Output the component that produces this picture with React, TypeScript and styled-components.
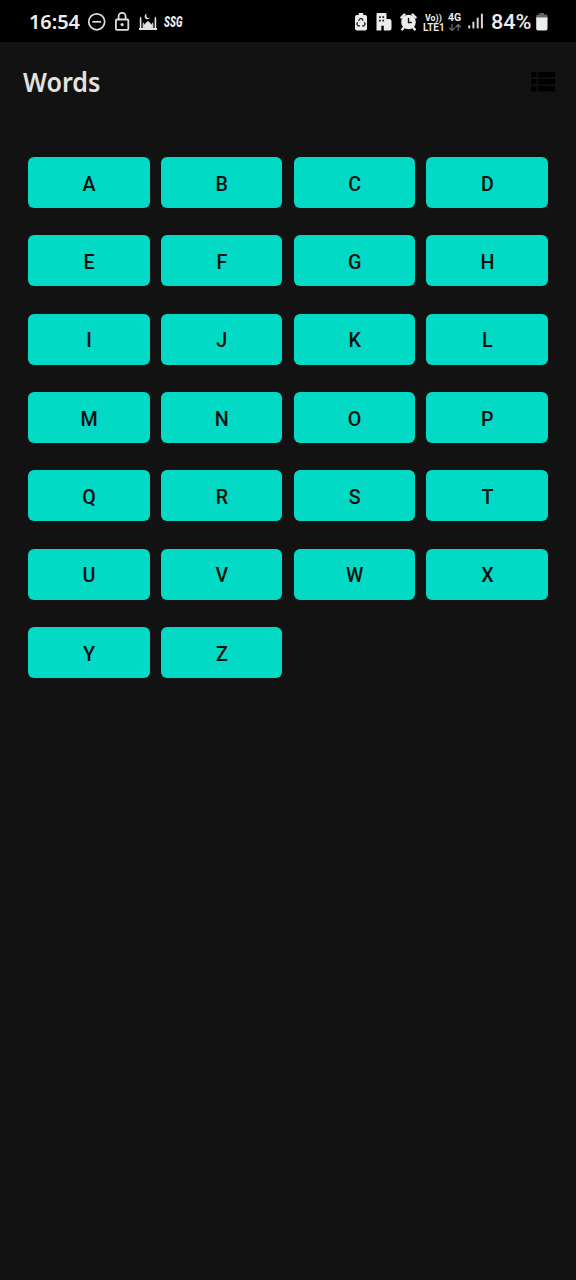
import React from "react";
import styled, { createGlobalStyle } from "styled-components";

const GlobalStyle = createGlobalStyle`
  * { box-sizing: border-box; }
  html, body { margin: 0; padding: 0; background: #121212; }
  body { font-family: "Noto Sans", Roboto, sans-serif; }
`;

const Screen = styled.div`
  width: 576px;
  height: 1280px;
  overflow: hidden;
  background: #121212;
`;

const StatusBar = styled.header`
  display: flex;
  justify-content: space-between;
  height: 42px;
  padding: 0 28px 0 29px;
  background: #000;
  color: #ededed;
`;

const StatusGroup = styled.div`
  display: flex;
  align-items: center;
  height: 43px;
  svg { display: block; flex: none; }
`;

const Label = styled.span<{ $w: number; $size: number; $weight?: number; $stretch?: number; $ml?: number }>`
  flex: none;
  width: ${(p) => p.$w}px;
  margin-left: ${(p) => p.$ml ?? 0}px;
  font-size: ${(p) => p.$size}px;
  font-weight: ${(p) => p.$weight ?? 600};
  line-height: 1;
  white-space: nowrap;
  transform: scaleX(${(p) => p.$stretch ?? 1});
  transform-origin: left center;
`;

const Carrier = styled(Label)`
  font-family: Roboto, sans-serif;
  font-style: italic;
`;

const Percent = styled(Label)`
  padding-top: 2px;
  font-family: Roboto, sans-serif;
`;

const NetworkLine = styled(Label)`
  font-family: Roboto, sans-serif;
  line-height: ${(p) => p.$size - 0.5}px;
`;

const Stack = styled.div<{ $w: number; $ml: number }>`
  display: flex;
  flex-direction: column;
  justify-content: space-between;
  flex: none;
  width: ${(p) => p.$w}px;
  height: 20px;
  margin-top: 2px;
  margin-left: ${(p) => p.$ml}px;
`;

const Icon = styled.svg<{ $ml: number }>`
  margin-left: ${(p) => p.$ml}px;
`;

const AppBar = styled.div`
  display: flex;
  align-items: center;
  justify-content: space-between;
  height: 80px;
  padding: 0 21px 0 23px;
`;

const Title = styled.h1`
  margin: 0;
  color: #e2e2e2;
  font-size: 27.3px;
  font-weight: 600;
  line-height: 36px;
  transform: scaleX(0.92);
  transform-origin: left center;
`;

const ListButton = styled.button`
  width: 24px;
  height: 20px;
  padding: 0;
  border: 0;
  background: none;
  svg { display: block; }
`;

const LetterGrid = styled.main`
  display: grid;
  grid-template-columns: repeat(4, 121.6px);
  grid-auto-rows: 51.2px;
  gap: 27.2px 11.2px;
  padding: 34.8px 28px 0;
`;

const LetterButton = styled.button`
  display: flex;
  align-items: center;
  justify-content: center;
  padding: 4px 0 0 0.5px;
  border: 0;
  border-radius: 6px;
  background: #03dac6;
  color: #07110f;
  font-family: Roboto, sans-serif;
  font-size: 19.7px;
  font-weight: 500;
  line-height: 1;
`;

const letters = "ABCDEFGHIJKLMNOPQRSTUVWXYZ".split("");

const DoNotDisturb = () => (
  <Icon $ml={7} width="20" height="20" viewBox="0 0 20 20" fill="none" stroke="#dedede" strokeWidth="1.7">
    <circle cx="9.7" cy="9.8" r="8" />
    <path d="M5.3 9.8h8.8" />
  </Icon>
);

const Lock = () => (
  <Icon $ml={7} width="16" height="20" viewBox="0 0 16 20" fill="none" stroke="#dedede" strokeWidth="1.8">
    <rect x="1.9" y="7.5" width="12.4" height="10.3" rx="1" />
    <path d="M4.6 7.5V4.3a3.5 3.5 0 0 1 7 0v3.2" />
    <circle cx="8.1" cy="12.6" r="1.6" fill="#dedede" stroke="none" />
  </Icon>
);

const Mosque = () => (
  <Icon $ml={9} width="18" height="20" viewBox="0 0 18 20" fill="#e6e6e6">
    <path d="M0 18v-2h.8V6.500L1.600 4.500l.8 2V16h13.200V6.500l.8-2 .8 2V16h.8v2Z" />
    <path d="M5.400 16c-2.200-3 1.200-4.700 3.600-7 2.400 2.300 5.800 4 3.600 7Z" />
    <path d="M3.700 16v-4.500l.6-1.300.6 1.300V16ZM13.100 16v-4.500l.6-1.300.6 1.300V16Z" />
    <path d="M8.400 1.500a2.900 2.900 0 1 0 2.700 4.100A2.300 2.300 0 0 1 8.400 1.500Z" />
  </Icon>
);

const BatteryCare = () => (
  <Icon $ml={0} width="12" height="18" viewBox="0 0 12 18">
    <path fill="#ececec" d="M3.8 0h4.4v2h2A1.8 1.8 0 0 1 12 3.8v11.9a1.8 1.8 0 0 1-1.800 1.800H1.800A1.800 1.800 0 0 1 0 15.700V3.800A1.800 1.800 0 0 1 1.800 2h2Z" />
    <path fill="none" stroke="#222" strokeWidth="1.3" d="M3.500 8 5.100 5.700h1.800l1.300 2M9.300 9.300l.9 1.700-1.200 1.900H7M5 12.900H3L1.800 11l.8-1.700" />
  </Icon>
);

const Building = () => (
  <Icon $ml={9} width="16" height="18" viewBox="0 0 16 18">
    <path fill="#ececec" d="M1.700 0h7.600a1.200 1.200 0 0 1 1.200 1.200V6h2.800a2.200 2.200 0 0 1 2.200 2.200v7.300a2 2 0 0 1-2 2H7.800v-4.700H5.300v4.700H.5V1.200A1.200 1.200 0 0 1 1.700 0Z" />
    <path fill="#222" d="M3 3.200h1.800V5H3zM6.300 3.200h1.800V5H6.300zM3 6.800h1.800v1.800H3zM6.300 6.800h1.800v1.800H6.300z" />
  </Icon>
);

const Alarm = () => (
  <Icon $ml={8} width="17" height="18" viewBox="0 0 17 18">
    <path d="m1.400 4.500 3-3M15.600 4.500l-3-3M4 14.200l-1.800 2.200M13 14.200l1.800 2.200" stroke="#ececec" strokeWidth="2.4" strokeLinecap="round" />
    <circle cx="8.5" cy="9" r="7.3" fill="#ececec" />
    <path d="M8.500 5v4.500h3.300" fill="none" stroke="#111" strokeWidth="1.4" />
  </Icon>
);

const DataArrows = () => (
  <svg width="14" height="9" viewBox="0 0 14 9" fill="none" stroke="#6a6a6a" strokeWidth="1.2">
    <path d="M4 0v6.500M1.200 3.700 4 6.500l2.800-2.800M10.200 7V.5M7.400 3.300 10.200.5 13 3.300" />
  </svg>
);

const Signal = () => (
  <Icon $ml={5} width="17" height="18" viewBox="0 0 17 18" fill="#d5d5d5">
    <rect x="1.2" y="12.4" width="2" height="3" />
    <rect x="5.4" y="8.700" width="2" height="6.700" />
    <rect x="9.7" y="4.700" width="2" height="10.700" />
    <rect x="13.9" y=".7" width="2" height="14.700" />
  </Icon>
);

const Battery = () => (
  <Icon $ml={4} width="12" height="18" viewBox="0 0 12 18">
    <path fill="#666" d="M3.500 0h4.500v1.600h1.800a1.700 1.700 0 0 1 1.700 1.700V6H.2V3.300a1.700 1.700 0 0 1 1.700-1.700h1.600Z" />
    <path fill="#ededed" d="M.2 4.500h11.300v11.200a1.700 1.700 0 0 1-1.700 1.700H1.900A1.700 1.700 0 0 1 .2 15.700Z" />
  </Icon>
);

export default function App() {
  return (
    <>
      <GlobalStyle />
      <Screen>
        <StatusBar>
          <StatusGroup>
            <Label $w={51} $size={20.3} $stretch={0.98}>16:54</Label>
            <DoNotDisturb />
            <Lock />
            <Mosque />
            <Carrier $w={20} $size={14} $weight={900} $stretch={0.7} $ml={7}>SSG</Carrier>
          </StatusGroup>
          <StatusGroup>
            <BatteryCare />
            <Building />
            <Alarm />
            <Stack $w={22} $ml={6}>
              <NetworkLine $w={20} $size={9.5} $weight={700} $stretch={0.93} $ml={2}>Vo))</NetworkLine>
              <NetworkLine $w={22} $size={10.5} $weight={600} $stretch={0.95}>LTE1</NetworkLine>
            </Stack>
            <Stack $w={14} $ml={3}>
              <NetworkLine $w={14} $size={10.5} $weight={700}>4G</NetworkLine>
              <DataArrows />
            </Stack>
            <Signal />
            <Percent $w={41} $size={21} $weight={500} $ml={7} $stretch={1.03}>84%</Percent>
            <Battery />
          </StatusGroup>
        </StatusBar>
        <AppBar>
          <Title>Words</Title>
          <ListButton aria-label="List view">
            <svg width="24" height="20" viewBox="0 0 24 20" fill="#000">
              <path d="M0 0h5.500v5.500H0zM7 0h17v5.500H7zM0 7h5.500v5.500H0zM7 7h17v5.500H7zM0 14h5.500v5.500H0zM7 14h17v5.500H7z" />
            </svg>
          </ListButton>
        </AppBar>
        <LetterGrid>
          {letters.map((letter) => (
            <LetterButton key={letter}>{letter}</LetterButton>
          ))}
        </LetterGrid>
      </Screen>
    </>
  );
}
